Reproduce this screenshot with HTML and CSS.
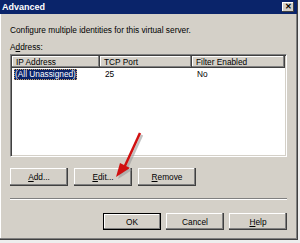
FILE: index.html
```html
<!DOCTYPE html>
<html lang="en">
<head>
  <meta charset="UTF-8" />
  <title>Advanced</title>
  <link rel="stylesheet" href="styles.css">
</head>
<body>

  <div class="dialog">
    <div class="titlebar">
      <span class="title">Advanced</span>
      <span class="close">&#x2715;</span>
    </div>

    <div class="content">
      <p class="intro">Configure multiple identities for this virtual server.</p>
      <div class="field-label">A<u>d</u>dress:</div>

      <div class="listview">
        <div class="lv-header">
          <div class="lv-col col-ip">IP Address</div>
          <div class="lv-col col-port">TCP Port</div>
          <div class="lv-col col-filter">Filter Enabled</div>
        </div>
        <div class="lv-row">
          <div class="lv-cell col-ip"><span class="selected">(All Unassigned)</span></div>
          <div class="lv-cell col-port">25</div>
          <div class="lv-cell col-filter">No</div>
        </div>
      </div>

      <div class="btn-row">
        <button class="btn"><u>A</u>dd...</button>
        <button class="btn"><u>E</u>dit...</button>
        <button class="btn"><u>R</u>emove</button>
      </div>

      <div class="separator"></div>

      <div class="btn-row actions">
        <button class="btn btn-default">OK</button>
        <button class="btn">Cancel</button>
        <button class="btn"><u>H</u>elp</button>
      </div>
    </div>

    <!-- fleche rouge ajoutee sur la capture -->
    <svg class="arrow" width="40" height="56" viewBox="0 0 40 56">
      <line x1="29" y1="3" x2="13" y2="38" stroke="#9a9a9a" stroke-width="2.5" opacity="0.6" transform="translate(2,2)"/>
      <polygon points="5,47 9,33 19,38" fill="#9a9a9a" opacity="0.6" transform="translate(2,2)"/>
      <line x1="29" y1="3" x2="13" y2="38" stroke="#d01010" stroke-width="2.5"/>
      <polygon points="5,47 9,33 19,38" fill="#d01010"/>
    </svg>
  </div>

</body>
</html>
```

FILE: styles.css
```css
:root {
  --face: #d4d0c8;
  --shadow: #808080;
  --dark: #404040;
  --light: #ffffff;
  --navy: #0a246a;
  --font-main: 'Liberation Sans', Arial, sans-serif;
}

body {
  margin: 0;
  background: #eeeeee;
  font-family: var(--font-main);
  font-size: 8.3px;
  color: #000;
}

.dialog {
  position: relative;
  width: 298px;
  height: 240px;
  box-sizing: border-box;
  background: var(--face);
  border-right: 1px solid var(--dark);
  border-bottom: 1px solid var(--dark);
  box-shadow: inset -1px -1px 0 var(--shadow), inset 1px 0 0 var(--light);
}

.titlebar {
  height: 14px;
  background: var(--navy);
  display: flex;
  align-items: center;
  justify-content: space-between;
  padding: 0 3px 0 2px;
}

.title {
  color: #fff;
  font-weight: bold;
  font-size: 9px;
}

.close {
  width: 12px;
  height: 10px;
  background: var(--face);
  box-shadow: inset -1px -1px 0 var(--dark), inset 1px 1px 0 var(--light);
  font-size: 8px;
  font-weight: bold;
  line-height: 10px;
  text-align: center;
}

.content {
  padding: 11px 10px 0 10px;
}

.intro {
  margin: 0;
  line-height: 10px;
}

.field-label {
  margin-top: 7px;
  line-height: 10px;
}

.listview {
  margin-top: 2px;
  width: 277px;
  height: 103px;
  box-sizing: border-box;
  background: #fff;
  border-top: 1px solid var(--shadow);
  border-left: 1px solid var(--shadow);
  border-right: 1px solid var(--light);
  border-bottom: 1px solid var(--light);
  box-shadow: inset 1px 1px 0 var(--dark), inset -1px -1px 0 var(--face);
  padding: 1px;
}

.lv-header,
.lv-row {
  display: flex;
}

.lv-col {
  height: 12px;
  line-height: 12px;
  box-sizing: border-box;
  background: var(--face);
  padding-left: 4px;
  box-shadow: inset -1px -1px 0 var(--dark), inset -2px -2px 0 var(--shadow), inset 1px 1px 0 var(--light);
}

.col-ip { width: 88px; }
.col-port { width: 92px; }
.col-filter { width: 93px; }

.lv-cell {
  height: 12px;
  line-height: 12px;
  padding-left: 5px;
  box-sizing: border-box;
}

.lv-cell.col-ip {
  padding-left: 2px;
}

.selected {
  display: inline-block;
  background: var(--navy);
  color: #fff;
  padding: 0 1px;
  line-height: 11px;
  outline: 1px dotted #c8a060;
  outline-offset: -1px;
}

.btn-row {
  display: flex;
  gap: 6px;
  margin-top: 11px;
}

.btn-row.actions {
  justify-content: flex-end;
  margin-top: 13px;
  gap: 5px;
}

.btn {
  width: 58px;
  height: 18px;
  margin: 0;
  padding: 0;
  border: none;
  background: var(--face);
  font-family: var(--font-main);
  font-size: 8.3px;
  color: #000;
  box-shadow: inset -1px -1px 0 var(--dark), inset -2px -2px 0 var(--shadow), inset 1px 1px 0 var(--light);
}

.actions .btn {
  height: 17px;
}

.btn-default {
  box-shadow: inset 0 0 0 1px #000, inset -2px -2px 0 var(--shadow), inset 2px 2px 0 var(--light);
}

.separator {
  margin-top: 12px;
  width: 277px;
  height: 1px;
  background: var(--shadow);
  border-bottom: 1px solid var(--light);
}

.arrow {
  position: absolute;
  left: 111px;
  top: 130px;
}
```
